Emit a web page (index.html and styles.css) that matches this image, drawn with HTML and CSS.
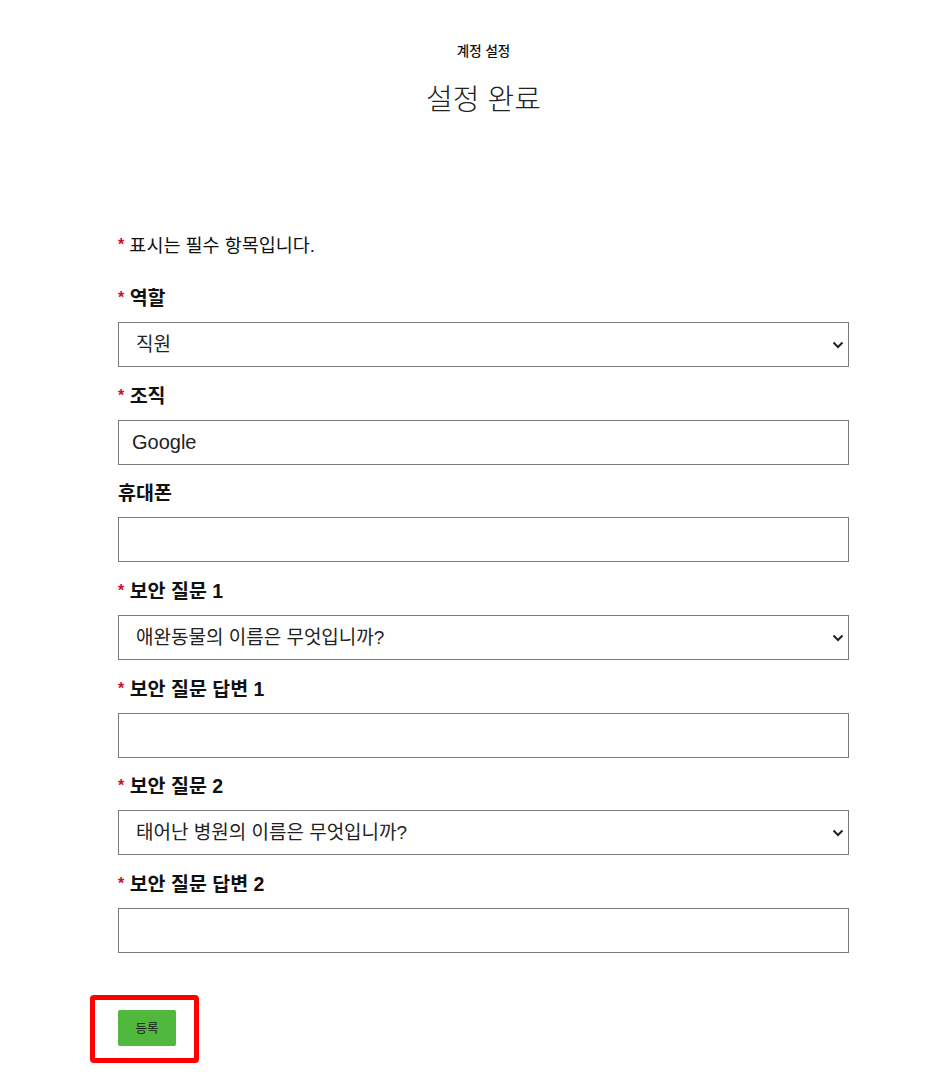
FILE: index.html
```html
<!DOCTYPE html>
<html lang="ko">
<head>
<meta charset="utf-8">
<title>설정 완료</title>
<link rel="stylesheet" href="styles.css">
</head>
<body>
<header class="head">
  <div class="crumb">계정 설정</div>
  <h1 class="title">설정 완료</h1>
</header>
<form class="form">
  <p class="note"><span class="req">*</span> 표시는 필수 항목입니다.</p>

  <div class="field">
    <label class="label"><span class="req">*</span> 역할</label>
    <div class="select-wrap">
      <div class="control select">직원</div>
      <svg class="chev" width="12" height="8" viewBox="0 0 12 8"><path d="M1.5 1.5 L6 6 L10.5 1.5" fill="none" stroke="#222" stroke-width="2"/></svg>
    </div>
  </div>

  <div class="field">
    <label class="label"><span class="req">*</span> 조직</label>
    <div class="control input">Google</div>
  </div>

  <div class="field">
    <label class="label">휴대폰</label>
    <div class="control input"></div>
  </div>

  <div class="field">
    <label class="label"><span class="req">*</span> 보안 질문 1</label>
    <div class="select-wrap">
      <div class="control select">애완동물의 이름은 무엇입니까?</div>
      <svg class="chev" width="12" height="8" viewBox="0 0 12 8"><path d="M1.5 1.5 L6 6 L10.5 1.5" fill="none" stroke="#222" stroke-width="2"/></svg>
    </div>
  </div>

  <div class="field">
    <label class="label"><span class="req">*</span> 보안 질문 답변 1</label>
    <div class="control input"></div>
  </div>

  <div class="field">
    <label class="label"><span class="req">*</span> 보안 질문 2</label>
    <div class="select-wrap">
      <div class="control select">태어난 병원의 이름은 무엇입니까?</div>
      <svg class="chev" width="12" height="8" viewBox="0 0 12 8"><path d="M1.5 1.5 L6 6 L10.5 1.5" fill="none" stroke="#222" stroke-width="2"/></svg>
    </div>
  </div>

  <div class="field">
    <label class="label"><span class="req">*</span> 보안 질문 답변 2</label>
    <div class="control input"></div>
  </div>

  <div class="actions">
    <div class="btn-wrap">
      <button type="button" class="btn">등록</button>
      <div class="highlight"></div>
    </div>
  </div>
</form>
</body>
</html>
```

FILE: styles.css
```css
* { box-sizing: border-box; }
html, body { margin: 0; padding: 0; background: #fff; }
body {
  font-family: "Liberation Sans", "Noto Sans CJK KR", sans-serif;
  color: #111;
  padding-bottom: 40px;
}
.head {
  text-align: center;
  padding-top: 40px;
  margin-left: 118px;
  width: 731px;
}
.crumb {
  font-family: "Noto Sans CJK KR", sans-serif;
  font-size: 13.5px;
  line-height: 20px;
  height: 20px;
  font-weight: 500;
  color: #111;
}
.title {
  margin: 20px 0 0;
  font-size: 29px;
  line-height: 40px;
  height: 40px;
  font-weight: 300;
  color: #222;
}
.form {
  margin-left: 118px;
  width: 731px;
  padding-top: 114px;
  display: flex;
  flex-direction: column;
}
.note {
  margin: 0 0 28px;
  font-size: 18.5px;
  line-height: 24px;
  height: 24px;
  color: #111;
}
.req {
  color: #c8102e;
  font-weight: 700;
  font-size: 16px;
  position: relative;
  top: -2px;
}
.field {
  display: flex;
  flex-direction: column;
  margin-bottom: 16.67px;
}
.label {
  font-size: 19.5px;
  line-height: 24px;
  height: 24px;
  font-weight: 700;
  margin-bottom: 12px;
  color: #111;
}
.control {
  height: 45px;
  border: 1px solid #7a7a7a;
  background: #fff;
  font-size: 19px;
  line-height: 43px;
  color: #222;
  width: 100%;
  overflow: hidden;
}
.input { padding-left: 13px; font-size: 20px; }
.select { padding-left: 17px; }
.select-wrap { position: relative; height: 45px; }
.chev {
  position: absolute;
  right: 5px;
  top: 19px;
}
.actions {
  padding-top: 40px;
  display: flex;
}
.btn-wrap { position: relative; }
.btn {
  display: block;
  width: 58px;
  height: 36px;
  border: 0;
  border-radius: 2px;
  background: #4fb83d;
  color: #1a1a1a;
  font-family: "Noto Sans CJK KR", sans-serif;
  font-size: 12.5px;
  padding: 0;
}
.highlight {
  position: absolute;
  left: -28px;
  top: -15px;
  width: 109px;
  height: 68px;
  border: 5px solid #ff0000;
  border-radius: 4px;
}
```
